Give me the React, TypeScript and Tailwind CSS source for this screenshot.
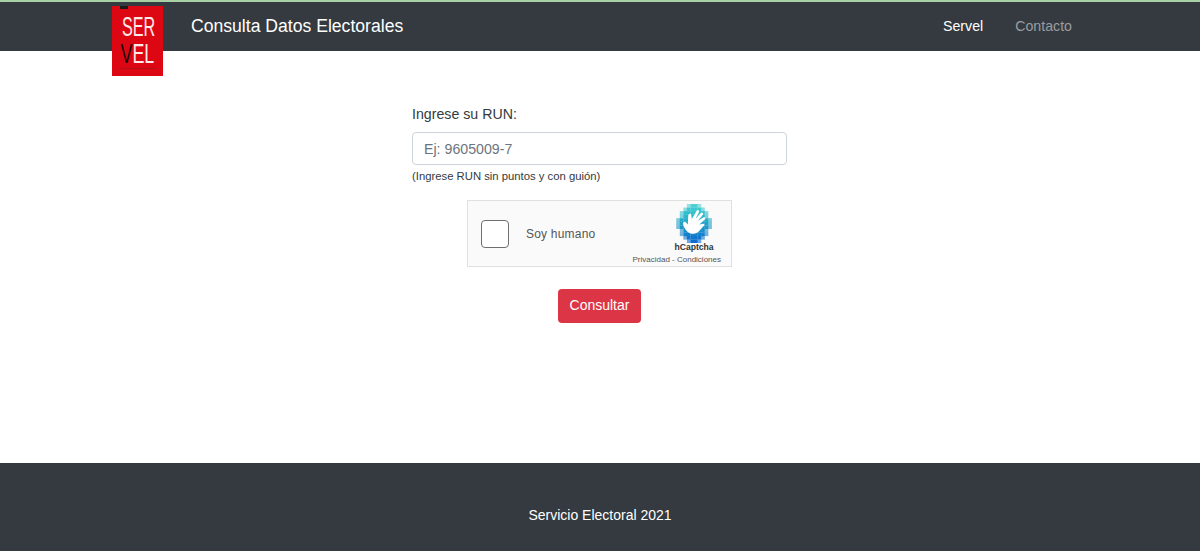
const ROWS: [number, number][] = [
  [12, 16], [8, 24], [4, 32], [4, 32], [0, 40], [0, 40], [0, 40], [4, 32], [4, 32], [8, 24], [12, 16],
];
const ROW_COLORS = ["#4fd0d4", "#3ec8d0", "#32bfcc", "#2bb6ca", "#27acc9", "#23a2c9", "#1f98ca", "#1a8dcb", "#1582cd", "#1077cf", "#0b6dd0"];

function HCaptchaIcon() {
  return (
    <svg width="38" height="39" viewBox="0 0 40 44" className="block">
      {ROWS.map(([x, w], i) =>
        Array.from({ length: w / 4 }).map((_, j) => {
          const cx = x + j * 4;
          const edge = j === 0 || j === w / 4 - 1;
          return <rect key={`${i}-${j}`} x={cx} y={i * 4} width="4.2" height="4.2" fill={ROW_COLORS[i]} opacity={edge ? 0.6 : 1} />;
        })
      )}
      <path
        d="M8 24 C7 20.5 9 19 11 21 L13 23 L13.5 13 C14 10.5 17 10.5 17 13 L17.5 17 L23 7.5 C24.5 6 26.4 7.5 25.4 9.5 L21.8 16.5 L28 10 C29.5 9 31.2 10.6 30 12.2 L24.6 18.8 L31 15 C32.6 14.5 33.6 16.2 32.2 17.5 L26 23 L30.5 22.4 C32 22.4 32.2 24 31 24.8 C28 27 26 32.5 20 33.6 C14.5 34 10 30 8 24 Z"
        fill="#ffffff"
      />
    </svg>
  );
}

function Logo() {
  return (
    <div className="absolute left-[112px] top-[6px] w-[51px] h-[70px] bg-[#dd0613] overflow-hidden" style={{ fontFamily: '"Liberation Sans", Arial, sans-serif' }}>
      <div className="absolute left-[8px] top-0 w-[8px] h-[3px] bg-[#1a1a1a]" />
      <div className="absolute left-0 top-[6px] w-[50px] text-center text-[#ffe9e9] text-[27px] leading-[30px] scale-x-[0.6]">SER</div>
      <div className="absolute left-0 top-[33px] w-[50px] text-center text-[#ffe9e9] text-[27px] leading-[30px] scale-x-[0.66]">
        <span className="text-[#1a0a0a]">V</span>EL
      </div>
      <div className="absolute left-[8px] top-[62px] w-[35px] h-px bg-[#b3101a]" />
    </div>
  );
}

export default function App() {
  return (
    <div className="min-h-screen flex flex-col bg-white text-[#212529] relative" style={{ fontFamily: '"Liberation Sans", Arial, sans-serif' }}>
      <header className="h-[51px] bg-[#343a40] border-t-2 border-[#a9cfa4] flex items-center pl-[191px] pr-[128px]">
        <span className="text-white text-[17.6px]">Consulta Datos Electorales</span>
        <nav className="ml-auto flex gap-[32px] text-[14.2px]">
          <a className="text-white">Servel</a>
          <a className="text-[#9a9da0]">Contacto</a>
        </nav>
      </header>
      <Logo />

      <main className="flex-1 flex flex-col items-center pt-[51px] pr-px">
        <div className="w-[375px]">
          <label className="block text-[14.2px] leading-[24px] mb-[6px] text-[#343a40]">Ingrese su RUN:</label>
          <input
            placeholder="Ej: 9605009-7"
            className="block w-full h-[33px] px-[11px] text-[14.2px] bg-white border border-[#ced4da] rounded-[4px] placeholder:text-[#6c757d] outline-none"
          />
          <p className="text-[11.3px] leading-[18px] mt-[2px] text-[#343a40]">(Ingrese RUN sin puntos y con guión)</p>
        </div>

        <div className="mt-[15px] w-[265px] h-[67px] bg-[#fafafa] border border-[#e0e0e0] flex items-center pl-[13px] relative">
          <div className="w-[28px] h-[28px] bg-white border border-[#6f6f6f] rounded-[4px]" />
          <span className="ml-[17px] text-[12px] text-[#555] tracking-[0.2px]">Soy humano</span>
          <div className="absolute right-[12px] top-[3px] w-[50px] flex flex-col items-center">
            <HCaptchaIcon />
            <span className="text-[8.6px] leading-[10px] -mt-[1px] font-bold text-[#333]">hCaptcha</span>
          </div>
          <span className="absolute right-[10px] bottom-[1px] text-[8px] leading-[10px] text-[#555]">Privacidad - Condiciones</span>
        </div>

        <button className="mt-[22px] w-[83px] h-[34px] pb-[2px] bg-[#dc3545] text-white text-[14px] rounded-[4px]">Consultar</button>
      </main>

      <footer className="h-[88px] bg-[#343a40] flex items-center justify-center pt-[17px]">
        <span className="text-white text-[14px]">Servicio Electoral 2021</span>
      </footer>
    </div>
  );
}
